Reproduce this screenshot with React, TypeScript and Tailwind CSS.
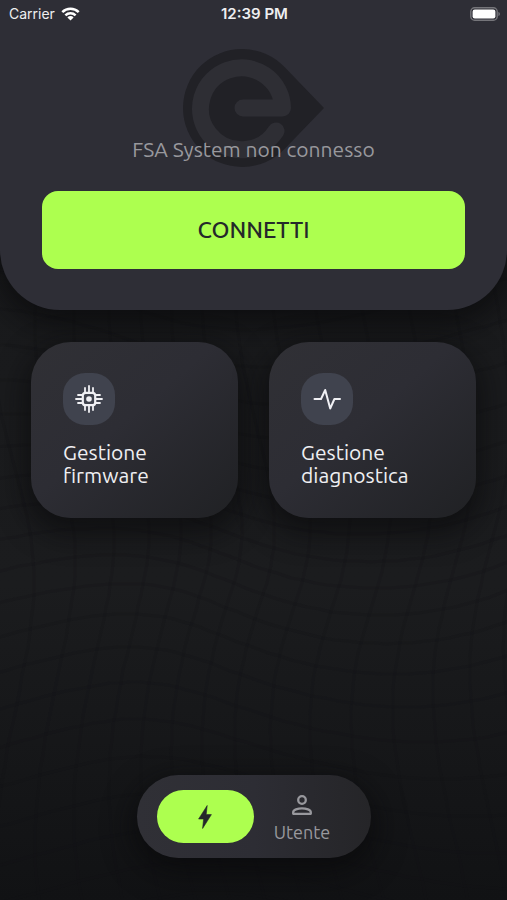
import type { ReactNode } from "react";

const ubuntu = "font-['Ubuntu','Noto_Sans',sans-serif]";

function warp(x: number, y: number): [number, number] {
  const dx = 20 * Math.sin(y / 78 + x / 190) + 10 * Math.sin(x / 60);
  const dy = 30 * Math.sin(x / 95 - y / 240) + 12 * Math.cos(y / 70);
  return [x + dx, y + dy];
}

function meshLines(): string[] {
  const lines: string[] = [];
  for (let x = -60; x <= 580; x += 36) {
    const pts: string[] = [];
    for (let y = 240; y <= 960; y += 12) {
      pts.push(warp(x, y).map(Math.round).join(","));
    }
    lines.push(pts.join(" "));
  }
  for (let y = 240; y <= 960; y += 32) {
    const pts: string[] = [];
    for (let x = -60; x <= 580; x += 12) {
      pts.push(warp(x, y).map(Math.round).join(","));
    }
    lines.push(pts.join(" "));
  }
  return lines;
}

function Backdrop() {
  return (
    <svg
      className="absolute inset-0 h-full w-full"
      viewBox="0 0 507 900"
      preserveAspectRatio="xMidYMid slice"
      aria-hidden="true"
    >
      <g fill="none" stroke="#131416" strokeWidth="3" strokeOpacity="0.22">
        {meshLines().map((points, i) => (
          <polyline key={i} points={points} />
        ))}
      </g>
    </svg>
  );
}

function StatusBar() {
  return (
    <div className="grid h-7 grid-cols-3 items-center pr-[7px] pl-[9px] font-['Inter',sans-serif] text-[#eeeef0]">
      <div className="flex items-center gap-[6px] text-sm">
        <span>Carrier</span>
        <svg width="19" height="14" viewBox="0 0 19 14" fill="none" stroke="#fff" strokeWidth="2.5" role="img" aria-label="Wi-Fi">
          <path d="M1.3 5.1a11.6 11.6 0 0 1 16.400 0" />
          <path d="M4.4 8.400a7.200 7.200 0 0 1 10.200 0" />
          <path d="M9.500 13.600 6.400 10.400a4.400 4.400 0 0 1 6.200 0z" fill="#fff" stroke="none" />
        </svg>
      </div>
      <span className="text-center text-[15px] font-semibold">12:39 PM</span>
      <svg className="justify-self-end" width="30" height="14" viewBox="0 0 30 14" role="img" aria-label="Batteria">
        <rect x="0.8" y="0.8" width="26.4" height="12.4" rx="3.8" fill="none" stroke="#75757a" strokeWidth="1.4" />
        <rect x="2.6" y="2.6" width="22.8" height="8.8" rx="2.2" fill="#fff" />
        <path d="M28.4 5v4c1-.3 1.500-1.100 1.500-2s-.5-1.700-1.500-2z" fill="#75757a" />
      </svg>
    </div>
  );
}

function Logo() {
  return (
    <svg width="142" height="118" viewBox="0 0 142 118" fill="none" aria-hidden="true">
      <path d="M102 18.600 141 59 102 99.400A59 59 0 1 1 102 18.600z" fill="#212126" />
      <path
        d="M60 59H99.500A41 41 0 1 0 93 82"
        stroke="#2e2e34"
        strokeWidth="17"
        strokeLinecap="round"
        strokeLinejoin="round"
      />
    </svg>
  );
}

function ChipIcon() {
  return (
    <svg width="28" height="28" viewBox="0 0 28 28" fill="none" stroke="#f0f0f4" strokeWidth="1.8" strokeLinecap="round" aria-hidden="true">
      <rect x="7.800" y="7.800" width="12.400" height="12.400" rx="2.800" strokeWidth="2.2" />
      <path d="M14 1v6M10 3v4M18 3v4M14 21v6M10 21v4M18 21v4M1 14h6M3 10h4M3 18h4M21 14h6M21 10h4M21 18h4" />
      <circle cx="14" cy="14" r="2.800" fill="#f0f0f4" stroke="none" />
    </svg>
  );
}

function PulseIcon() {
  return (
    <svg width="28" height="28" viewBox="0 0 28 28" fill="none" stroke="#f0f0f4" strokeWidth="2" strokeLinecap="round" strokeLinejoin="round" aria-hidden="true">
      <path d="M1.500 14H8l4.200-9 5 18.500L21.400 14H27" />
    </svg>
  );
}

function BoltIcon() {
  return (
    <svg width="14" height="24" viewBox="0 0 14 24" fill="#24282a" aria-hidden="true">
      <path d="M9.200.500.600 14h5L4.600 23.500 13.400 9.600H8.200z" strokeLinejoin="round" stroke="#24282a" strokeWidth=".6" />
    </svg>
  );
}

function UserIcon() {
  return (
    <svg width="20" height="22" viewBox="0 0 20 22" fill="none" stroke="#98989d" strokeWidth="2.300" strokeLinejoin="round" aria-hidden="true">
      <circle cx="10" cy="6" r="3.800" />
      <path d="M1.200 19.800v-1.600c0-2.300 4.600-3.900 8.800-3.900s8.800 1.600 8.800 3.900v1.600z" />
    </svg>
  );
}

function ActionCard({ icon, lines }: { icon: ReactNode; lines: [string, string] }) {
  return (
    <button
      type="button"
      className="flex h-44 flex-col items-start rounded-[40px] bg-linear-to-br from-[#303035] via-[#2d2d34] via-45% to-[#202124] px-8 pt-[31px] text-left shadow-[0_10px_28px_6px_rgba(8,8,10,0.6)]"
    >
      <span className="flex h-[52px] w-[52px] items-center justify-center rounded-[22px] bg-[#40434e]">{icon}</span>
      <span className="mt-4 text-[21px] leading-[23px] text-[#efeff2]">
        {lines[0]}
        <br />
        {lines[1]}
      </span>
    </button>
  );
}

export default function App() {
  return (
    <div className={`relative isolate flex min-h-screen flex-col overflow-hidden bg-linear-to-b from-[#18191b] via-[#1b1c1e] via-65% to-[#111214] ${ubuntu}`}>
      <Backdrop />
      <header className="relative rounded-b-[60px] bg-[#2e2e36] pb-[41px] shadow-[0_10px_30px_4px_rgba(8,8,10,0.7)]">
        <StatusBar />
        <div className="relative flex flex-col items-center px-[42px] pt-[107px]">
          <div className="absolute top-[21px] left-1/2 -translate-x-1/2">
            <Logo />
          </div>
          <p className="relative text-[21px] leading-7 text-[#98989d]">FSA System non connesso</p>
          <button
            type="button"
            className="mt-7 h-[78px] w-full rounded-2xl bg-[#adff4f] text-[23px] font-medium text-[#24282a]"
          >
            CONNETTI
          </button>
        </div>
      </header>
      <main className="relative grid grid-cols-2 gap-[31px] px-[31px] pt-8">
        <ActionCard icon={<ChipIcon />} lines={["Gestione", "firmware"]} />
        <ActionCard icon={<PulseIcon />} lines={["Gestione", "diagnostica"]} />
      </main>
      <nav className="relative mx-auto mt-auto mb-[42px] flex h-[83px] w-[234px] items-center rounded-full bg-linear-to-r from-[#303036] via-[#2d2d34] to-[#252528] px-5 shadow-[0_10px_30px_4px_rgba(8,8,10,0.7)]">
        <button
          type="button"
          aria-label="Connessione"
          className="flex h-[53px] flex-1 items-center justify-center rounded-full bg-[#adff4f]"
        >
          <BoltIcon />
        </button>
        <button type="button" className="flex flex-1 flex-col items-center gap-1 pt-1 text-lg leading-6 text-[#98989d]">
          <UserIcon />
          Utente
        </button>
      </nav>
    </div>
  );
}
